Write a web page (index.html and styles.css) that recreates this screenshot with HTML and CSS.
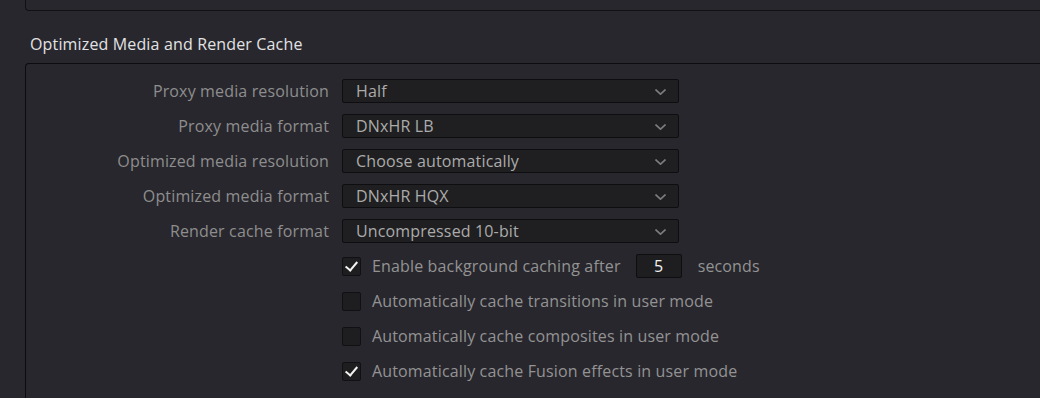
FILE: index.html
```html
<!DOCTYPE html>
<html lang="en">
<head>
  <meta charset="UTF-8" />
  <title>Optimized Media and Render Cache</title>
  <link rel="stylesheet" href="styles.css">
</head>
<body>
  <div class="panel-top"></div>

  <h2 class="section-title">Optimized Media and Render Cache</h2>

  <div class="panel">
    <div class="row">
      <label class="row-label">Proxy media resolution</label>
      <div class="select">Half<svg class="chev" width="11" height="6" viewBox="0 0 11 6"><polyline points="0.5,0.5 5.5,5.2 10.5,0.5"/></svg></div>
    </div>
    <div class="row">
      <label class="row-label">Proxy media format</label>
      <div class="select">DNxHR LB<svg class="chev" width="11" height="6" viewBox="0 0 11 6"><polyline points="0.5,0.5 5.5,5.2 10.5,0.5"/></svg></div>
    </div>
    <div class="row">
      <label class="row-label">Optimized media resolution</label>
      <div class="select">Choose automatically<svg class="chev" width="11" height="6" viewBox="0 0 11 6"><polyline points="0.5,0.5 5.5,5.2 10.5,0.5"/></svg></div>
    </div>
    <div class="row">
      <label class="row-label">Optimized media format</label>
      <div class="select">DNxHR HQX<svg class="chev" width="11" height="6" viewBox="0 0 11 6"><polyline points="0.5,0.5 5.5,5.2 10.5,0.5"/></svg></div>
    </div>
    <div class="row">
      <label class="row-label">Render cache format</label>
      <div class="select">Uncompressed 10-bit<svg class="chev" width="11" height="6" viewBox="0 0 11 6"><polyline points="0.5,0.5 5.5,5.2 10.5,0.5"/></svg></div>
    </div>

    <div class="row check-row">
      <span class="check on"></span>
      <span class="check-text">Enable background caching after</span>
      <span class="num">5</span>
      <span class="check-text">seconds</span>
    </div>
    <div class="row check-row">
      <span class="check"></span>
      <span class="check-text">Automatically cache transitions in user mode</span>
    </div>
    <div class="row check-row">
      <span class="check"></span>
      <span class="check-text">Automatically cache composites in user mode</span>
    </div>
    <div class="row check-row">
      <span class="check on"></span>
      <span class="check-text">Automatically cache Fusion effects in user mode</span>
    </div>
  </div>
</body>
</html>
```

FILE: styles.css
```css
body {
  margin: 0;
  background: #28272d;
  font-family: "Open Sans", "Noto Sans", sans-serif;
  font-size: 16px;
  letter-spacing: 0.15px;
  color: #8e8e8e;
  overflow: hidden;
}
.panel-top {
  margin-left: 25px;
  height: 10px;
  border-left: 1px solid #111114;
  border-bottom: 1px solid #111114;
  border-bottom-left-radius: 4px;
}
.section-title {
  margin: 24px 0 0 30px;
  font-size: 16px;
  font-weight: normal;
  line-height: 19px;
  color: #e2e2e4;
}
.panel {
  box-sizing: border-box;
  height: 335px;
  margin-top: 9px;
  margin-left: 25px;
  padding-top: 15px;
  border-top: 1px solid #0c0c0e;
  border-left: 1px solid #0c0c0e;
  border-top-left-radius: 4px;
}
.row {
  display: flex;
  align-items: center;
  height: 24px;
  margin-bottom: 11px;
}
.row-label {
  width: 303px;
  text-align: right;
  margin-right: 13px;
}
.select {
  position: relative;
  box-sizing: border-box;
  width: 337px;
  height: 24px;
  line-height: 23px;
  padding-left: 13px;
  background: #1f1f21;
  border: 1px solid #0e0e10;
  border-radius: 2px;
  color: #ababab;
}
.chev {
  position: absolute;
  right: 12px;
  top: 9px;
  fill: none;
  stroke: #7c7c7e;
  stroke-width: 1.6;
}
.check-row {
  padding-left: 316px;
}
.check {
  box-sizing: border-box;
  width: 19px;
  height: 19px;
  background: #1e1e20;
  border: 1px solid #111113;
  border-radius: 2px;
  margin-right: 11px;
  position: relative;
}
.check.on::after {
  content: "";
  position: absolute;
  left: 5px;
  top: 1px;
  width: 5px;
  height: 10px;
  border-right: 2px solid #f2f2f2;
  border-bottom: 2px solid #f2f2f2;
  transform: rotate(40deg);
}
.check-text {
  color: #939393;
}
.num {
  box-sizing: border-box;
  width: 46px;
  height: 24px;
  line-height: 23px;
  margin: 0 16px 0 15px;
  text-align: center;
  background: #1e1e20;
  border: 1px solid #0e0e10;
  border-radius: 2px;
  color: #f2f2f2;
}
```
